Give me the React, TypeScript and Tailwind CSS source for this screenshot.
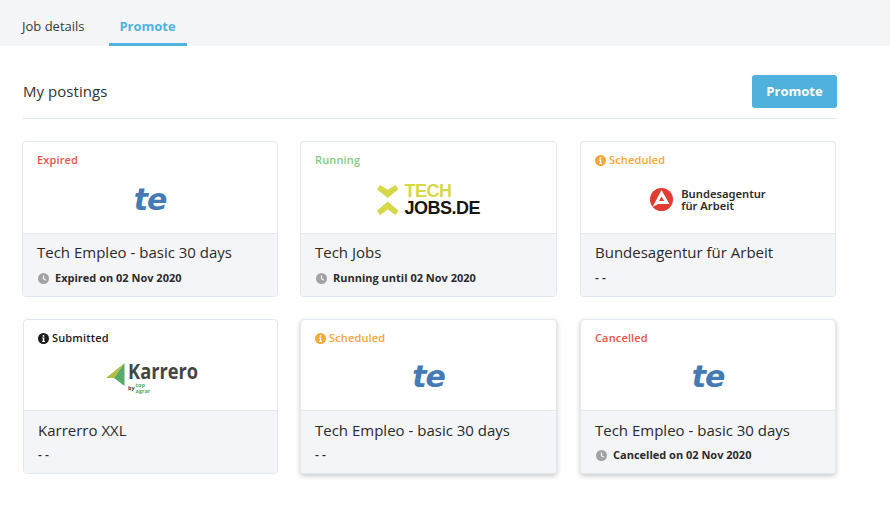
import React from "react";

const Clock = () => (
  <svg width="11" height="11" viewBox="0 0 12 12" className="shrink-0">
    <circle cx="6" cy="6" r="6" fill="#a3a3a5" />
    <path d="M6 2.6V6.2L8.4 7.8" fill="none" stroke="#f4f5f8" strokeWidth="1.3" />
  </svg>
);

const Info = ({ color }: { color: string }) => (
  <svg width="11" height="11" viewBox="0 0 12 12" className="shrink-0">
    <circle cx="6" cy="6" r="6" fill={color} />
    <rect x="5.1" y="2.3" width="1.8" height="1.8" fill="#fff" />
    <path d="M4.6 5H6.9V8.6H7.6V9.7H4.5V8.6H5.2V6.1H4.6Z" fill="#fff" />
  </svg>
);

const Te = () => (
  <span className="text-[30px] leading-none font-extrabold italic text-[#457bb5] [font-family:'DejaVu_Sans',sans-serif] tracking-[-1px]">
    te
  </span>
);

const TechJobs = () => (
  <div className="flex items-center gap-[6px]">
    <svg width="21.5" height="30" viewBox="0 0 21.5 30">
      <path d="M3 0L10.75 4.8L18.5 0L21.5 4.2L10.75 13L0 4.2Z" fill="#d4d84a" />
      <path d="M10.75 16.5L21.5 25.8L18.5 30L10.75 24.6L3 30L0 25.8Z" fill="#d4d84a" />
    </svg>
    <div className="flex flex-col pt-[1px] [font-family:'Liberation_Sans',sans-serif] font-bold text-[18px] leading-[17px] tracking-[-0.5px]">
      <span className="text-[#d4d84a]">TECH</span>
      <span className="text-[#161616]">JOBS.DE</span>
    </div>
  </div>
);

const Bundes = () => (
  <div className="flex items-center gap-[8px]">
    <svg width="23" height="23" viewBox="0 0 23 23">
      <circle cx="11.5" cy="11.5" r="11.5" fill="#e03c31" />
      <path fillRule="evenodd" d="M11.5 2L19.5 16H8L2.5 19ZM11.5 8.5L14.2 13H9Z" fill="#fff" />
    </svg>
    <div className="flex flex-col pt-[1px] text-[11.2px] leading-[12px] font-semibold text-[#2b2b2b] [font-family:'Noto_Sans',sans-serif]">
      <span>Bundesagentur</span>
      <span>für Arbeit</span>
    </div>
  </div>
);

const Karrero = () => (
  <div className="flex items-start gap-[3px] ml-[2px]">
    <svg width="19" height="23" viewBox="0 0 19 23" className="mt-[3px]">
      <path d="M0 15L18.5 0L8 15Z" fill="#b4bc3c" />
      <path d="M18.5 0V23L8 15Z" fill="#55ab67" />
    </svg>
    <div className="flex flex-col w-[69px]">
      <span className="block origin-left scale-x-[0.87] text-[21px] leading-[22px] font-bold text-[#454545] [font-family:'Open_Sans',sans-serif]">
        Karrero
      </span>
      <div className="flex items-center gap-[1px]">
        <span className="text-[5.5px] leading-[6px] font-bold text-[#454545]">by</span>
        <span className="text-[5.5px] leading-[6px] font-bold text-[#55ab67]">top<br />agrar</span>
      </div>
    </div>
  </div>
);

type C = {
  status: string;
  color: string;
  info?: boolean;
  title: string;
  logo: React.ReactNode;
  foot?: string;
  raised?: boolean;
  pad: string;
  lower?: boolean;
};

const cards: C[] = [
  { status: "Expired", color: "#e8544c", title: "Tech Empleo - basic 30 days", logo: <Te />, foot: "Expired on 02 Nov 2020", pad: "ml-0" },
  { status: "Running", color: "#86c97f", title: "Tech Jobs", logo: <TechJobs />, foot: "Running until 02 Nov 2020", pad: "ml-0" },
  { status: "Scheduled", color: "#f5a63c", info: true, title: "Bundesagentur für Arbeit", logo: <Bundes />, pad: "ml-[1px]" },
  { status: "Submitted", color: "#1c1c1c", info: true, title: "Karrerro XXL", logo: <Karrero />, pad: "ml-[1px]", lower: true },
  { status: "Scheduled", color: "#f5a63c", info: true, title: "Tech Empleo - basic 30 days", logo: <Te />, raised: true, pad: "ml-0", lower: true },
  { status: "Cancelled", color: "#e8544c", title: "Tech Empleo - basic 30 days", logo: <Te />, foot: "Cancelled on 02 Nov 2020", raised: true, pad: "ml-[1px]", lower: true },
];

const Card = ({ c }: { c: C }) => (
  <div
    className={`${c.pad} ${c.lower ? "h-[155px]" : "h-[156px]"} flex flex-col rounded-[4px] border border-[#e2e8f0] overflow-hidden bg-white ${
      c.raised ? "shadow-[0_2px_5px_rgba(0,0,0,0.22)]" : ""
    }`}
  >
    <div className={`${c.lower ? "h-[90px]" : "h-[91px]"} shrink-0 flex flex-col px-[14px] pt-[10px]`}>
      <div className="flex items-center gap-[3px] h-[16px] text-[11px] font-semibold tracking-[0.15px]" style={{ color: c.color }}>
        {c.info && <Info color={c.color} />}
        <span>{c.status}</span>
      </div>
      <div className="flex-1 flex items-center justify-center pb-[2px]">{c.logo}</div>
    </div>
    <div className={`flex-1 bg-[#f4f5f8] border-t border-[#e2e8f0] px-[14px] ${c.lower ? "pt-[9px]" : "pt-[8px]"}`}>
      <div className="text-[15px] leading-[20px] font-medium text-[#2b2b2b]">{c.title}</div>
      <div className={`${c.lower ? "mt-[6px]" : "mt-[7px]"} h-[18px] flex items-center gap-[6px] text-[11px] font-bold text-[#2b2b2b] pl-[1px]`}>
        {c.foot ? (
          <>
            <Clock />
            <span>{c.foot}</span>
          </>
        ) : (
          <span className="font-semibold text-[12px] -ml-[1px]">- -</span>
        )}
      </div>
    </div>
  </div>
);

export default function App() {
  return (
    <div className="w-[890px] h-[523px] bg-white overflow-hidden text-[#2b2b2b] [font-family:'Open_Sans',sans-serif]">
      <div className="h-[46px] bg-[#f4f5f7] flex items-stretch pl-[22px]">
        <div className="text-[13px] text-[#3a3a3a] flex items-center pt-[7px]">Job details</div>
        <div className="ml-[24px] w-[78px] border-b-[3px] border-[#4fb3de] flex items-center justify-center pt-[10px] text-[13px] font-bold text-[#4fb3de]">
          Promote
        </div>
      </div>
      <div className="ml-[23px] w-[814px] mt-[29px] h-[44px] border-b border-[#e2e8f0] flex items-start justify-between">
        <div className="text-[15px] leading-[33px] font-medium tracking-[0.05px] text-[#333]">My postings</div>
        <button className="w-[85px] h-[33px] rounded-[3px] bg-[#50b1dc] text-white text-[13px] font-bold">
          Promote
        </button>
      </div>
      <div className="ml-[22px] w-[815px] mt-[22px] grid grid-cols-[256px_257px_257px] gap-x-[22px] gap-y-[22px]">
        {cards.map((c, i) => (
          <Card key={i} c={c} />
        ))}
      </div>
    </div>
  );
}
